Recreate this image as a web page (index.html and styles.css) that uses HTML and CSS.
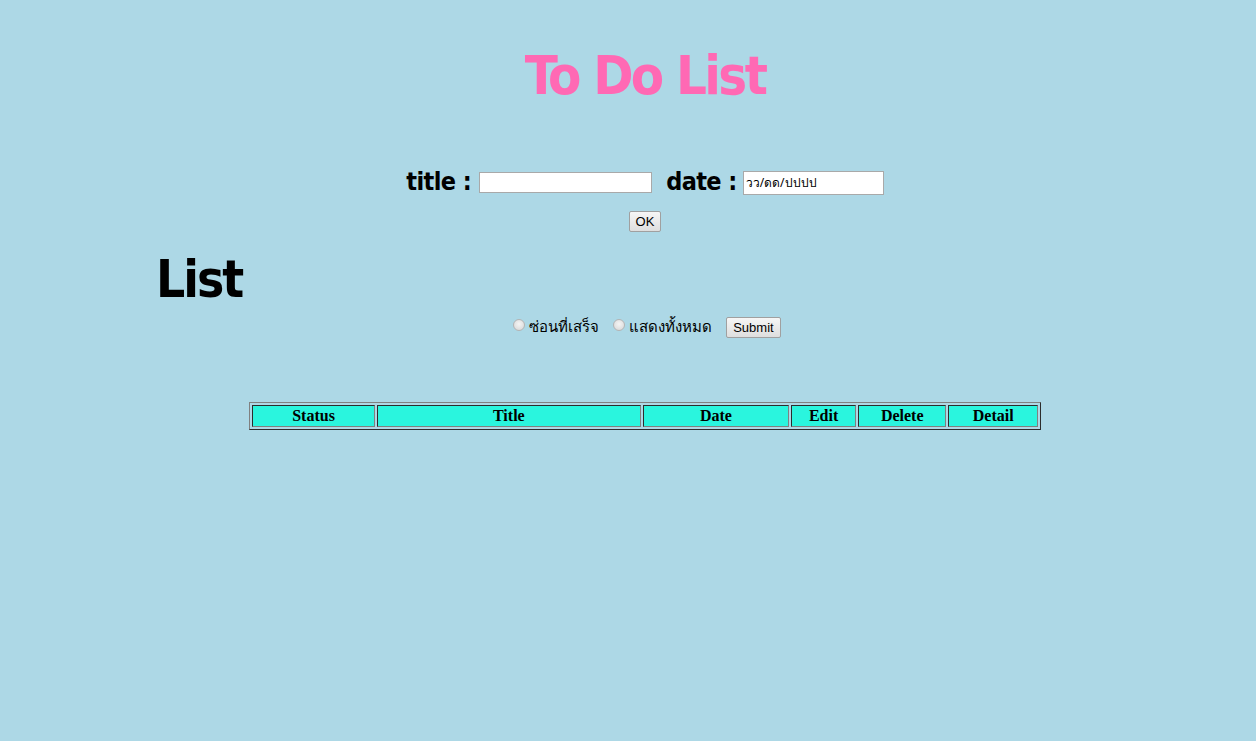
FILE: index.html
```html
<!DOCTYPE html>
<html>
<head>
<meta charset="utf-8">
<link rel="stylesheet" href="styles.css">
</head>
<body>
<div class="page">
  <h1 class="main-title">To Do List</h1>
  <form class="add-form">
    <div class="add-row">
      <label class="lbl">title :</label>
      <input class="title-input" type="text">
      <label class="lbl lbl-date">date :</label>
      <input class="date-input" type="text" value="วว/ดด/ปปปป">
    </div>
    <div class="ok-row"><button class="btn" type="button">OK</button></div>
  </form>
  <h1 class="list-title">List</h1>
  <div class="filter-row">
    <input class="radio" type="radio" name="f"><span class="opt">ซ่อนที่เสร็จ</span>
    <input class="radio" type="radio" name="f"><span class="opt">แสดงทั้งหมด</span>
    <button class="btn btn-submit" type="button">Submit</button>
  </div>
  <table class="todo" border="1">
    <tr>
      <th class="c-status">Status</th>
      <th class="c-title">Title</th>
      <th class="c-date">Date</th>
      <th class="c-edit">Edit</th>
      <th class="c-delete">Delete</th>
      <th class="c-detail">Detail</th>
    </tr>
  </table>
</div>
</body>
</html>
```
FILE: styles.css
```css
html, body { margin: 0; padding: 0; }
body {
  background: #add8e6;
  font-family: "DejaVu Sans", Verdana, sans-serif;
}
.page {
  padding-left: 34px;
  padding-top: 1px;
}
.main-title {
  margin: 45px 0 0 0;
  text-align: center;
  color: #ff69b4;
  font-family: "DejaVu Sans Condensed", "DejaVu Sans", sans-serif;
  font-size: 54px;
  font-weight: bold;
  letter-spacing: -2.6px;
  line-height: 60px;
}
.add-form { margin-top: 62px; text-align: center; }
.add-row { display: flex; justify-content: center; align-items: center; height: 26px; }
.lbl {
  font-family: "DejaVu Sans Condensed", "DejaVu Sans", sans-serif;
  font-weight: bold; font-size: 25px; margin-right: 8px;
  letter-spacing: -0.6px;
}
.lbl-date { margin-left: 14px; margin-right: 6px; }
.title-input {
  width: 169px; height: 17px; padding: 1px; border: 1px solid #a9a9a9;
  margin: 2px 0 0 0;
  font-size: 13px;
}
.date-input {
  width: 135px; height: 20px; padding: 1px 2px; border: 1px solid #a9a9a9;
  margin: 3px 0 0 0;
  font-family: "Noto Sans", sans-serif;
  font-size: 12px;
  box-sizing: content-box;
}
.ok-row { margin-top: 17px; }
.btn {
  font-family: Arial, "Liberation Sans", sans-serif;
  font-size: 13px;
  padding: 2px 6px;
  border: 1px solid #a0a0a0;
  background: linear-gradient(#f6f6f6, #dedede);
  border-radius: 2px;
  height: 21px;
}
.list-title {
  margin: 20px 0 0 122px;
  font-family: "DejaVu Sans Condensed", "DejaVu Sans", sans-serif;
  font-size: 51px;
  letter-spacing: -2px;
  line-height: 56px;
  font-weight: bold;
}
.filter-row {
  text-align: center;
  margin-top: 7px;
  font-family: "Noto Sans", "DejaVu Sans", sans-serif;
  font-size: 15px;
}
.radio {
  -webkit-appearance: none;
  appearance: none;
  width: 12px; height: 12px; margin: 0 4px 0 4px; vertical-align: 1px;
  border: 1px solid #b4b4b4;
  border-radius: 50%;
  background: radial-gradient(circle at 50% 40%, #f4f4f4, #d6d6d6);
  box-sizing: border-box;
}
.opt { margin-right: 6px; }
.btn-submit { margin-left: 4px; }
.todo {
  margin: 63px auto 0 auto;
  width: 792px;
  border-collapse: separate;
  border-spacing: 2px;
  background: transparent;
}
.todo th {
  background: #2af5de;
  font-family: "Liberation Serif", "Times New Roman", serif;
  font-size: 16px;
  font-weight: bold;
  height: 18px;
  padding: 1px;
}
.c-status { width: 120px; }
.c-title { width: 262px; }
.c-date { width: 144px; }
.c-edit { width: 61px; }
.c-delete { width: 85px; }
.c-detail { width: 86px; }
```
